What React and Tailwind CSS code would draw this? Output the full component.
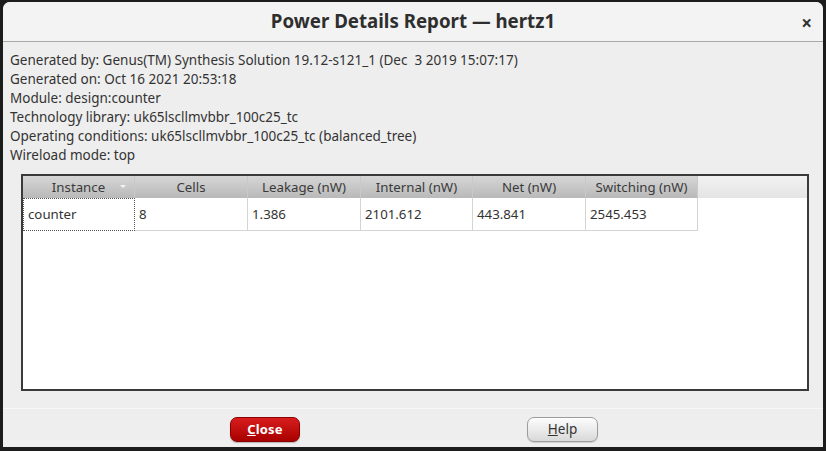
import React from "react";

const INFO = [
  "Generated by: Genus(TM) Synthesis Solution 19.12-s121_1 (Dec  3 2019 15:07:17)",
  "Generated on: Oct 16 2021 20:53:18",
  "Module: design:counter",
  "Technology library: uk65lscllmvbbr_100c25_tc",
  "Operating conditions: uk65lscllmvbbr_100c25_tc (balanced_tree)",
  "Wireload mode: top",
];

const COLUMNS = [
  { label: "Instance", width: "w-[112px]" },
  { label: "Cells", width: "w-[113px]" },
  { label: "Leakage (nW)", width: "w-[113px]" },
  { label: "Internal (nW)", width: "w-[112px]" },
  { label: "Net (nW)", width: "w-[113px]" },
  { label: "Switching (nW)", width: "w-[112px]" },
];

const ROW = ["counter", "8", "1.386", "2101.612", "443.841", "2545.453"];

const App = () => {
  return (
    <div
      className="w-[826px] h-[451px] bg-[#1c1c1c] pt-[2px] pl-[3px] pr-[3px] pb-[4px]"
      style={{ fontFamily: '"Noto Sans", "Open Sans", sans-serif' }}
    >
      <div className="h-full flex flex-col bg-[#eeeeee] rounded-t-[7px] overflow-hidden">
        {/* Title bar */}
        <div className="relative h-[40px] shrink-0 flex items-center justify-center bg-[#f3f3f3] border-b border-[#a9a9a9]">
          <h1 className="text-[18.7px] font-bold text-[#2e2e2e] pb-[1px]">
            Power Details Report — hertz1
          </h1>
          <span className="absolute right-[11px] top-[7px] text-[19px] font-bold text-[#333]">
            ×
          </span>
        </div>

        {/* Info */}
        <div className="pt-[9px] pl-[7px] text-[13.5px] leading-[19px] text-[#333]">
          {INFO.map((line) => (
            <p key={line} className="whitespace-pre">
              {line}
            </p>
          ))}
        </div>

        {/* Table */}
        <div className="mt-[9px] ml-[18px] mr-[14px] h-[217px] border-2 border-[#3a3a3a] bg-white">
          <div className="flex h-[22px] text-[13.25px] text-[#3a3a3a]">
            {COLUMNS.map((col, i) => (
              <div
                key={col.label}
                className={`${col.width} relative flex items-center justify-center pt-[1px] bg-gradient-to-b from-[#d6d6d6] to-[#b9b9b9] border-r border-[#c9c9c9]`}
              >
                {col.label}
                {i === 0 && (
                  <span className="absolute right-[8px] top-[9px] w-0 h-0 border-l-[3px] border-r-[3px] border-t-[3px] border-l-transparent border-r-transparent border-t-[#f4f4f4]" />
                )}
              </div>
            ))}
            <div className="flex-1 bg-gradient-to-b from-[#f2f2f2] to-[#e4e4e4]" />
          </div>
          <div className="flex h-[33px] text-[13.25px] text-[#333]">
            {ROW.map((val, i) => (
              <div
                key={i}
                className={`${COLUMNS[i].width} flex items-center pl-[4px] pt-[1px] ${
                  i === 0
                    ? "border border-dotted border-[#555] pl-[3px]"
                    : "border-r border-b border-[#d4d4d4]"
                }`}
              >
                {val}
              </div>
            ))}
          </div>
        </div>

        {/* Footer */}
        <div className="mt-[17px] border-t border-[#f8f8f8] flex-1 flex items-start pt-[8px] pl-[227px] gap-[227px]">
          <button className="w-[70px] h-[25px] rounded-[7px] bg-gradient-to-b from-[#d81c1c] to-[#a80000] border border-[#8a0000] text-white text-[13px] font-bold tracking-[0.2px] shadow-[0_1px_1px_rgba(0,0,0,0.25)]">
            <span className="underline">C</span>lose
          </button>
          <button className="w-[71px] h-[25px] rounded-[7px] bg-gradient-to-b from-[#fdfdfd] to-[#d9d9d9] border border-[#9c9c9c] text-[#333] text-[13.5px] shadow-[0_1px_1px_rgba(0,0,0,0.15)]">
            <span className="underline">H</span>elp
          </button>
        </div>
      </div>
    </div>
  );
};

export default App;
